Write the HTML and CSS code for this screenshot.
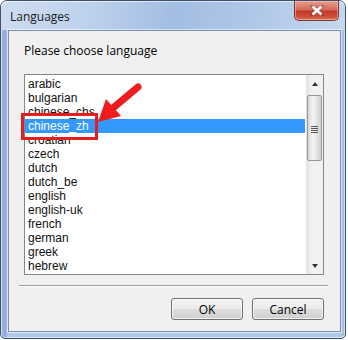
FILE: index.html
```html
<!DOCTYPE html>
<html lang="en">
<head>
  <meta charset="UTF-8" />
  <title>Languages</title>
  <link rel="stylesheet" href="styles.css">
</head>
<body>

  <div class="window">
    <div class="titlebar">
      <span class="title">Languages</span>
      <div class="close">
        <svg width="14" height="11" viewBox="0 0 14 11">
          <path d="M2 1 L12 10 M12 1 L2 10" stroke="#6b2a2a" stroke-width="4" stroke-linecap="square" opacity="0.35" />
          <path d="M2.5 1.5 L11.5 9.5 M11.5 1.5 L2.5 9.5" stroke="#fff" stroke-width="2.6" />
        </svg>
      </div>
    </div>

    <div class="client">
      <div class="prompt">Please choose language</div>

      <div class="listbox">
        <ul class="items">
          <li>arabic</li>
          <li>bulgarian</li>
          <li>chinese_chs</li>
          <li class="selected">chinese_zh</li>
          <li>croatian</li>
          <li>czech</li>
          <li>dutch</li>
          <li>dutch_be</li>
          <li>english</li>
          <li>english-uk</li>
          <li>french</li>
          <li>german</li>
          <li>greek</li>
          <li>hebrew</li>
        </ul>
        <div class="scrollbar">
          <div class="arrow up"></div>
          <div class="track">
            <div class="thumb"><span class="grip"></span></div>
          </div>
          <div class="arrow down"></div>
        </div>
      </div>

      <div class="separator"></div>

      <div class="buttons">
        <button class="btn">OK</button>
        <button class="btn">Cancel</button>
      </div>
    </div>

    <!-- anotacion roja -->
    <div class="mark-box"></div>
    <svg class="mark-arrow" width="348" height="340" viewBox="0 0 348 340">
      <line x1="113" y1="108" x2="138" y2="87" stroke="#ee1c1c" stroke-width="7" stroke-linecap="round" />
      <polygon points="98,122 106,99 121,116" fill="#ee1c1c" />
    </svg>
  </div>

</body>
</html>
```

FILE: styles.css
```css
* {
  box-sizing: border-box;
}

body {
  margin: 0;
  background: #ffffff;
  font-family: 'Open Sans', 'Liberation Sans', sans-serif;
  font-size: 12px;
  color: #000;
}

.window {
  position: relative;
  width: 346px;
  height: 339px;
  border: 1px solid #3f4f68;
  border-radius: 7px 7px 5px 5px;
  padding: 0 4px 6px 7px;
  display: flex;
  flex-direction: column;
  background: linear-gradient(90deg, #9fb8e0 0px, #8ea9d8 4px, #b3c9e8 7px, #b3c9e8 calc(100% - 5px), #9fb8e0 100%);
  box-shadow: inset 0 0 0 1px rgba(255, 255, 255, 0.55);
}

.titlebar {
  height: 29px;
  display: flex;
  align-items: flex-start;
  justify-content: space-between;
  background: linear-gradient(100deg, #cddcf0 0%, #bfd2ec 25%, #a3bde3 50%, #b1c8e8 75%, #c6d8ef 100%);
  margin: 0 -4px 0 -7px;
  padding-left: 9px;
  border-radius: 6px 6px 0 0;
  box-shadow: inset 0 1px 0 rgba(255, 255, 255, 0.6);
}

.title {
  padding-top: 7px;
  font-size: 12px;
  color: #1a1a1a;
}

.close {
  width: 45px;
  height: 20px;
  margin-right: 6px;
  border: 1px solid #7a3a3a;
  border-top: none;
  border-radius: 0 0 5px 5px;
  background: linear-gradient(180deg, #e8a090 0%, #d46a5a 45%, #c03a28 55%, #d0503c 85%, #e07a60 100%);
  display: flex;
  align-items: center;
  justify-content: center;
  box-shadow: inset 0 0 0 1px rgba(255, 200, 190, 0.5);
}

.client {
  flex: 1;
  background: #f0f0f0;
  border: 1px solid #7d90ab;
  box-shadow: 0 0 0 1px rgba(255, 255, 255, 0.55);
  padding: 13px 16px 10px 15px;
  display: flex;
  flex-direction: column;
}

.prompt {
  line-height: 14px;
  font-size: 12px;
}

.listbox {
  margin-top: 16px;
  height: 201px;
  border: 1px solid #828790;
  background: #fff;
  display: flex;
  font-family: 'Liberation Sans', Arial, sans-serif;
}

.items {
  list-style: none;
  margin: 0;
  padding: 2px 1px 0 0;
  flex: 1;
  overflow: hidden;
}

.items li {
  height: 14px;
  line-height: 14px;
  padding-left: 3px;
  font-size: 12px;
  white-space: nowrap;
  color: #111;
}

.items li.selected {
  background: #3399ff;
  color: #fff;
}

.scrollbar {
  width: 17px;
  background: linear-gradient(90deg, #e3e3e3, #f3f3f3 40%, #f0f0f0);
  display: flex;
  flex-direction: column;
}

.arrow {
  height: 17px;
  display: flex;
  align-items: center;
  justify-content: center;
}

.arrow.up::before,
.arrow.down::before {
  content: "";
  width: 0;
  height: 0;
  border-left: 3.5px solid transparent;
  border-right: 3.5px solid transparent;
}

.arrow.up::before {
  border-bottom: 4px solid #333;
}

.arrow.down::before {
  border-top: 4px solid #333;
}

.track {
  flex: 1;
  padding-top: 3px;
}

.thumb {
  margin: 0 1px;
  height: 66px;
  border: 1px solid #979797;
  border-radius: 2px;
  background: linear-gradient(90deg, #d6d6d6 0%, #f4f4f4 35%, #e8e8e8 60%, #cfcfcf 100%);
  display: flex;
  align-items: center;
  justify-content: center;
}

.grip {
  width: 7px;
  height: 7px;
  background: repeating-linear-gradient(180deg, #555 0 1px, transparent 1px 2px);
  margin-top: 2px;
}

.separator {
  margin: 10px -4px 0 -5px;
  height: 2px;
  border-top: 1px solid #a0a0a0;
  border-bottom: 1px solid #ffffff;
}

.buttons {
  margin-top: 11px;
  display: flex;
  justify-content: flex-end;
  gap: 9px;
}

.btn {
  width: 72px;
  height: 22px;
  border: 1px solid #707070;
  border-radius: 3px;
  background: linear-gradient(180deg, #f2f2f2 0%, #ebebeb 50%, #dddddd 51%, #cfcfcf 100%);
  box-shadow: inset 0 0 0 1px rgba(255, 255, 255, 0.7);
  font-family: 'Open Sans', 'Liberation Sans', sans-serif;
  font-size: 12px;
  color: #000;
  padding: 0;
}

.mark-box {
  position: absolute;
  left: 20px;
  top: 112px;
  width: 77px;
  height: 27px;
  border: 3px solid #e41d1d;
}

.mark-arrow {
  position: absolute;
  left: -1px;
  top: -1px;
  pointer-events: none;
}
```
